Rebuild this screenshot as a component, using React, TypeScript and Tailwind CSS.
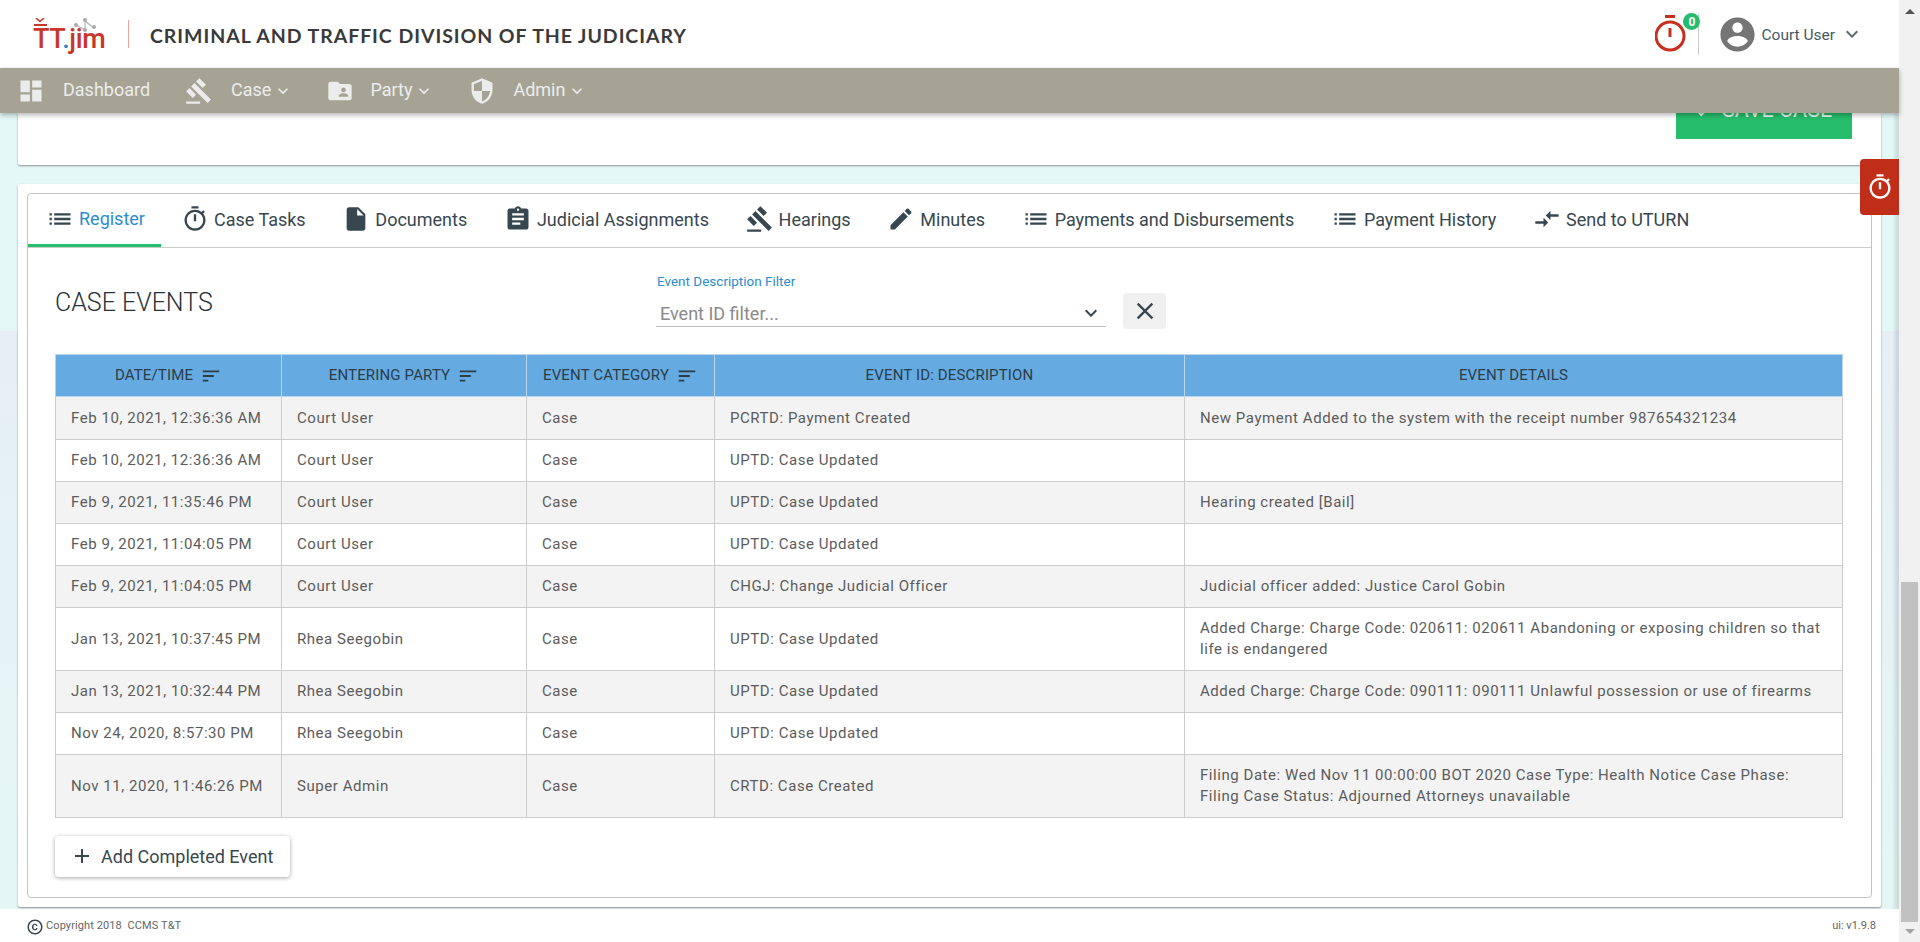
import React from 'react';

const ICONS = {
  dashboard: 'M3 13h8V3H3v10zm0 8h8v-6H3v6zm10 0h8V11h-8v10zm0-18v6h8V3h-8z',
  gavel: 'M1 21h12v2H1zM5.245 8.07l2.83-2.827 14.14 14.142-2.828 2.828zM12.317 1l5.657 5.656-2.83 2.83-5.654-5.66zM3.825 9.485l5.657 5.657-2.828 2.828-5.657-5.657z',
  folderShared: 'M20 6h-8l-2-2H4c-1.1 0-1.99.9-1.99 2L2 18c0 1.1.9 2 2 2h16c1.1 0 2-.9 2-2V8c0-1.1-.9-2-2-2zm-5 3c1.1 0 2 .9 2 2s-.9 2-2 2-2-.9-2-2 .9-2 2-2zm4 8h-8v-1c0-1.33 2.67-2 4-2s4 .67 4 2v1z',
  security: 'M12 1L3 5v6c0 5.55 3.84 10.74 9 12 5.16-1.26 9-6.45 9-12V5l-9-4zm0 10.99h7c-.53 4.12-3.28 7.79-7 8.94V12H5V6.3l7-3.11v8.8z',
  list: 'M3 13h2v-2H3v2zm0 4h2v-2H3v2zm0-8h2V7H3v2zm4 4h14v-2H7v2zm0 4h14v-2H7v2zM7 7v2h14V7H7z',
  timer: 'M15 1H9v2h6V1zm-4 13h2V8h-2v6zm8.03-6.61l1.42-1.42c-.43-.51-.9-.99-1.41-1.41l-1.42 1.42C16.07 4.74 14.12 4 12 4c-4.97 0-9 4.03-9 9s4.02 9 9 9 9-4.03 9-9c0-2.12-.74-4.07-1.97-5.61zM12 20c-3.87 0-7-3.13-7-7s3.13-7 7-7 7 3.13 7 7-3.13 7-7 7z',
  file: 'M6 2c-1.1 0-1.99.9-1.99 2L4 20c0 1.1.89 2 1.99 2H18c1.1 0 2-.9 2-2V8l-6-6H6zm7 7V3.5L18.5 9H13z',
  assignment: 'M19 3h-4.18C14.4 1.84 13.3 1 12 1c-1.3 0-2.4.84-2.82 2H5c-1.1 0-2 .9-2 2v14c0 1.1.9 2 2 2h14c1.1 0 2-.9 2-2V5c0-1.1-.9-2-2-2zm-7 0c.55 0 1 .45 1 1s-.45 1-1 1-1-.45-1-1 .45-1 1-1zm2 14H7v-2h7v2zm3-4H7v-2h10v2zm0-4H7V7h10v2z',
  edit: 'M3 17.25V21h3.75L17.81 9.94l-3.75-3.75L3 17.25zM20.71 7.04c.39-.39.39-1.02 0-1.41l-2.34-2.34c-.39-.39-1.02-.39-1.41 0l-1.83 1.83 3.75 3.75 1.83-1.83z',
  compare: 'M9.01 14H2v2h7.01v3L13 15l-3.99-4v3zm5.98-1v-3H22V8h-7.01V5L11 9l3.99 4z',
  sort: 'M3 18h6v-2H3v2zM3 6v2h18V6H3zm0 7h12v-2H3v2z',
  account: 'M12 2C6.48 2 2 6.48 2 12s4.48 10 10 10 10-4.48 10-10S17.52 2 12 2zm0 3c1.66 0 3 1.34 3 3s-1.34 3-3 3-3-1.34-3-3 1.34-3 3-3zm0 14.2c-2.5 0-4.71-1.28-6-3.22.03-1.99 4-3.08 6-3.08 1.99 0 5.97 1.09 6 3.08-1.29 1.94-3.5 3.22-6 3.22z',
  copyright: 'M10.08 10.86c.05-.33.16-.62.3-.87s.34-.46.59-.62c.24-.15.54-.22.91-.23.23.01.44.05.63.13.2.09.38.21.52.36s.25.33.34.53.13.42.14.64h1.79c-.02-.47-.11-.9-.28-1.29s-.4-.73-.7-1.01-.66-.5-1.08-.66-.88-.23-1.39-.23c-.65 0-1.22.11-1.7.34s-.88.53-1.2.92-.56.84-.71 1.36S8 11.29 8 11.87v.27c0 .58.08 1.12.23 1.64s.39.97.71 1.35.72.69 1.2.91 1.05.34 1.7.34c.47 0 .91-.08 1.32-.23s.77-.36 1.08-.63.56-.58.74-.94.29-.74.3-1.15h-1.79c-.01.21-.06.4-.15.58s-.21.33-.36.46-.32.23-.52.3c-.19.07-.39.09-.6.1-.36-.01-.66-.08-.89-.23-.25-.16-.45-.37-.59-.62s-.25-.55-.3-.88-.08-.67-.08-1v-.27c0-.35.03-.68.08-1.01zM12 2C6.48 2 2 6.48 2 12s4.48 10 10 10 10-4.48 10-10S17.52 2 12 2zm0 18c-4.41 0-8-3.59-8-8s3.59-8 8-8 8 3.59 8 8-3.59 8-8 8z',
  check: 'M9 16.17L4.83 12l-1.42 1.41L9 19 21 7l-1.41-1.41z',
  plus: 'M19 13h-6v6h-2v-6H5v-2h6V5h2v6h6v2z',
  close: 'M19 6.41L17.59 5 12 10.59 6.41 5 5 6.41 10.59 12 5 17.59 6.41 19 12 13.41 17.59 19 19 17.59 13.41 12z',
  chevron: 'M7.41 8.59L12 13.17l4.59-4.58L18 10l-6 6-6-6z',
};

type IconName = keyof typeof ICONS;

const Icon: React.FC<{ name: IconName; className?: string }> = ({ name, className }) => (
  <svg viewBox="0 0 24 24" fill="currentColor" className={`shrink-0 ${className ?? ''}`}>
    <path d={ICONS[name]} />
  </svg>
);

const NAV_ITEMS: { label: string; icon: IconName; menu: boolean; className: string; textClass: string }[] = [
  { label: 'Dashboard', icon: 'dashboard', menu: false, className: 'ml-[17px]', textClass: 'ml-[18px]' },
  { label: 'Case', icon: 'gavel', menu: true, className: 'ml-[35px]', textClass: 'ml-[18px]' },
  { label: 'Party', icon: 'folderShared', menu: true, className: 'ml-[33px]', textClass: 'ml-[16px]' },
  { label: 'Admin', icon: 'security', menu: true, className: 'ml-[34px]', textClass: 'ml-[17px]' },
];

const TABS: { label: string; icon: IconName; className: string; active?: boolean }[] = [
  { label: 'Register', icon: 'list', active: true, className: 'pl-[18px] pr-[16px]' },
  { label: 'Case Tasks', icon: 'timer', className: 'ml-[2px] pl-[18px] pr-[18.7px]' },
  { label: 'Documents', icon: 'file', className: 'pl-[18px] pr-[18.7px]' },
  { label: 'Judicial Assignments', icon: 'assignment', className: 'pl-[18px] pr-[18.7px]' },
  { label: 'Hearings', icon: 'gavel', className: 'pl-[18px] pr-[18.7px]' },
  { label: 'Minutes', icon: 'edit', className: 'pl-[18px] pr-[18.7px]' },
  { label: 'Payments and Disbursements', icon: 'list', className: 'pl-[18px] pr-[18.7px]' },
  { label: 'Payment History', icon: 'list', className: 'pl-[18px] pr-[18.7px]' },
  { label: 'Send to UTURN', icon: 'compare', className: 'pl-[18px] pr-[18.7px]' },
];

const EVENTS = [
  ['Feb 10, 2021, 12:36:36 AM', 'Court User', 'Case', 'PCRTD: Payment Created', 'New Payment Added to the system with the receipt number 987654321234'],
  ['Feb 10, 2021, 12:36:36 AM', 'Court User', 'Case', 'UPTD: Case Updated', ''],
  ['Feb 9, 2021, 11:35:46 PM', 'Court User', 'Case', 'UPTD: Case Updated', 'Hearing created [Bail]'],
  ['Feb 9, 2021, 11:04:05 PM', 'Court User', 'Case', 'UPTD: Case Updated', ''],
  ['Feb 9, 2021, 11:04:05 PM', 'Court User', 'Case', 'CHGJ: Change Judicial Officer', 'Judicial officer added: Justice Carol Gobin'],
  ['Jan 13, 2021, 10:37:45 PM', 'Rhea Seegobin', 'Case', 'UPTD: Case Updated', 'Added Charge: Charge Code: 020611: 020611 Abandoning or exposing children so that life is endangered'],
  ['Jan 13, 2021, 10:32:44 PM', 'Rhea Seegobin', 'Case', 'UPTD: Case Updated', 'Added Charge: Charge Code: 090111: 090111 Unlawful possession or use of firearms'],
  ['Nov 24, 2020, 8:57:30 PM', 'Rhea Seegobin', 'Case', 'UPTD: Case Updated', ''],
  ['Nov 11, 2020, 11:46:26 PM', 'Super Admin', 'Case', 'CRTD: Case Created', 'Filing Date: Wed Nov 11 00:00:00 BOT 2020 Case Type: Health Notice Case Phase: Filing Case Status: Adjourned Attorneys unavailable'],
];

const COLUMNS = [
  { label: 'DATE/TIME', sort: true, width: 'w-[226px]' },
  { label: 'ENTERING PARTY', sort: true, width: 'w-[245px]' },
  { label: 'EVENT CATEGORY', sort: true, width: 'w-[188px]' },
  { label: 'EVENT ID: DESCRIPTION', sort: false, width: 'w-[470px]' },
  { label: 'EVENT DETAILS', sort: false, width: '' },
];

const Logo = () => (
  <div className="relative ml-[33px] mt-[1px] h-[34px] w-[74px]">
    <span className="absolute left-0 top-[7px] font-['Roboto',sans-serif] text-[27px] leading-[28px] font-medium tracking-[-0.4px] text-[#c8372b]">
      TT<span className="text-[#2f86c5]">.</span>jim
    </span>
    <svg viewBox="0 0 74 34" className="absolute left-0 top-0 h-[34px] w-[74px]">
      <path d="M3 0l4 3.5L11 0" fill="none" stroke="#c8372b" strokeWidth="1.6" />
      <rect x="1" y="6" width="13" height="2" fill="#c8372b" />
      <path d="M43 7l9 5V3l9 7" fill="none" stroke="#b5b5b5" strokeWidth="1.2" />
      <circle cx="43" cy="7" r="2" fill="#a9a9a9" />
      <circle cx="52" cy="12" r="2" fill="#a9a9a9" />
      <circle cx="52" cy="2" r="2" fill="#a9a9a9" />
      <circle cx="61" cy="9" r="2" fill="#a9a9a9" />
    </svg>
  </div>
);

const Header = () => (
  <header className="flex h-[68px] shrink-0 items-center bg-white">
    <Logo />
    <div className="ml-[21px] h-[28px] w-px bg-[#e9a99f]" />
    <h1 className="ml-[21px] mt-[3px] font-['Lato',sans-serif] text-[19.5px] font-bold tracking-[0.95px] text-[#3a3a3a]">
      CRIMINAL AND TRAFFIC DIVISION OF THE JUDICIARY
    </h1>
    <div className="ml-auto flex items-center">
      <div className="relative h-[40px] w-[36px]">
        <svg viewBox="0 0 36 40" className="h-[40px] w-[36px] text-[#c62f1e]" fill="none" stroke="currentColor">
          <circle cx="15" cy="22" r="14" strokeWidth="3" />
          <path d="M10 2.500h10" strokeWidth="3" />
          <path d="M15 14v9" strokeWidth="3" />
        </svg>
        <span className="absolute right-[-9px] top-[-1px] flex h-[17px] w-[17px] items-center justify-center rounded-full bg-[#26bd6c] font-['Roboto',sans-serif] text-[12px] font-bold text-white">
          0
        </span>
      </div>
      <div className="ml-[7px] h-[41px] w-px bg-[#cccccc]" />
      <Icon name="account" className="ml-[18px] h-[41px] w-[41px] text-[#757575]" />
      <span className="ml-[3px] mt-[3px] font-['Roboto',sans-serif] text-[15.5px] text-[#455a64]">Court User</span>
      <Icon name="chevron" className="ml-[5px] mr-[35px] h-[24px] w-[24px] text-[#5f6b73]" />
    </div>
  </header>
);

const NavBar = () => (
  <nav className="relative z-20 flex h-[45px] shrink-0 items-center bg-[#a6a394] font-['Roboto',sans-serif] text-[18px] text-[#ececec] shadow-[0_2px_5px_rgba(0,0,0,0.3)]">
    {NAV_ITEMS.map((item) => (
      <div key={item.label} className={`flex items-center ${item.className}`}>
        <Icon name={item.icon} className="h-[28px] w-[28px]" />
        <span className={`${item.textClass} mb-[2px]`}>{item.label}</span>
        {item.menu && <Icon name="chevron" className="ml-[2px] h-[20px] w-[20px]" />}
      </div>
    ))}
  </nav>
);

const TabBar = () => (
  <div className="flex h-[54px] border-b border-[#cccccc] font-['Roboto',sans-serif] text-[18px] text-[#37474f]">
    {TABS.map((tab) => (
      <div
        key={tab.label}
        className={`flex items-center gap-[5px] ${tab.className} ${
          tab.active ? 'border-b-[3px] border-[#26bd6c] pb-[1px] text-[#2d8ccf]' : 'pb-[3px]'
        }`}
      >
        <Icon name={tab.icon} className={`h-[28px] w-[28px] ${tab.active ? 'text-[#37474f]' : ''}`} />
        <span>{tab.label}</span>
      </div>
    ))}
  </div>
);

const EventFilter = () => (
  <div className="ml-[445px] flex items-start gap-[17px]">
    <div className="w-[450px]">
      <div className="mt-[-4px] ml-[1px] text-[13.5px] leading-[16px] text-[#2d8ccf]">Event Description Filter</div>
      <div className="mt-[7px] flex h-[31px] items-center justify-between border-b border-[#bdbdbd] pl-[4px] pr-[3px] pt-[4px] text-[18px] text-[#8a8a8a]">
        <span>Event ID filter...</span>
        <Icon name="chevron" className="h-[24px] w-[24px] text-[#37474f]" />
      </div>
    </div>
    <button className="mt-[16px] flex h-[36px] w-[43px] items-center justify-center rounded bg-[#f0f0f0] text-[#37474f]">
      <Icon name="close" className="h-[28px] w-[28px]" />
    </button>
  </div>
);

const EventsTable = () => (
  <table className="w-[1788px] table-fixed border-collapse text-[15px] leading-[21px] tracking-[0.55px] text-[#5c5c5c]">
    <thead>
      <tr className="h-[42px] bg-[#66aae2] text-[#2b3d49]">
        {COLUMNS.map((col) => (
          <th key={col.label} className={`border border-[#b9d6ee] font-normal tracking-[0.15px] ${col.width}`}>
            <div className="flex items-center justify-center gap-[7px]">
              {col.label}
              {col.sort && <Icon name="sort" className="h-[22px] w-[22px]" />}
            </div>
          </th>
        ))}
      </tr>
    </thead>
    <tbody>
      {EVENTS.map((row, i) => (
        <tr key={i} className={`${i % 2 === 0 ? 'bg-[#f3f3f3]' : 'bg-white'} ${i === 0 ? 'h-[43px]' : ''}`}>
          {row.map((cell, j) => (
            <td key={j} className="border border-[#cccccc] px-[15px] py-[10px] align-middle">
              {cell}
            </td>
          ))}
        </tr>
      ))}
    </tbody>
  </table>
);

const App: React.FC = () => {
  return (
    <div className="flex h-screen overflow-hidden font-['Roboto',sans-serif]">
      <div className="relative flex min-w-0 flex-1 flex-col bg-[linear-gradient(#e4f9f7_0,#e4f9f7_331px,#e6eff6_331px,#e4f7f5_909px)] shadow-[inset_-4px_0_4px_rgba(0,0,0,0.12)]">
        <Header />
        <NavBar />

        {/* top card, scrolled mostly under the nav */}
        <div className="mx-[18px] flex h-[52px] shrink-0 items-end justify-end overflow-hidden rounded-b-[2px] bg-white pr-[29px] shadow-[0_1px_2px_rgba(0,0,0,0.4)]">
          <button className="mb-[26px] flex h-[57px] w-[176px] shrink-0 items-center gap-[7px] whitespace-nowrap bg-[#26bd6c] pb-[1px] pl-[17px] text-[21.5px] text-[#e9f8ef]">
            <Icon name="check" className="h-[22px] w-[22px]" />
            SAVE CASE
          </button>
        </div>

        {/* register card */}
        <div className="mx-[18px] mt-[19px] h-[723px] shrink-0 rounded-[2px] bg-white px-[9px] pt-[9px] shadow-[0_1px_2px_rgba(0,0,0,0.4)]">
          <div className="h-[705px] rounded-[4px] border border-[#c4c4c4]">
            <TabBar />
            <div className="px-[27px]">
              <div className="flex h-[106px] items-start pt-[29px]">
                <h2 className="mt-[11px] w-[156px] whitespace-nowrap text-[25px] leading-[30px] font-light text-[#263238]">CASE EVENTS</h2>
                <EventFilter />
              </div>
              <EventsTable />
              <button className="mt-[18px] flex h-[41px] w-[235px] items-center gap-[7px] rounded bg-white pb-[1px] pl-[15px] text-[18px] text-[#37474f] shadow-[0_1px_4px_rgba(0,0,0,0.35)]">
                <Icon name="plus" className="h-[24px] w-[24px]" />
                Add Completed Event
              </button>
            </div>
          </div>
        </div>

        <footer className="mt-[2px] flex flex-1 items-center bg-white pl-[26px] pr-[23px] pt-[2px] text-[#666666]">
          <Icon name="copyright" className="h-[18px] w-[18px] text-[#37474f]" />
          <span className="ml-[2px] text-[11px] tracking-[0.1px] whitespace-pre">Copyright 2018  CCMS T&amp;T</span>
          <span className="ml-auto text-[11px]">ui: v1.9.8</span>
        </footer>

        {/* floating timer tab */}
        <button className="absolute right-0 top-[159px] z-10 flex h-[56px] w-[39px] items-center justify-center rounded-l bg-[#c02e1a] text-white">
          <Icon name="timer" className="h-[28px] w-[28px]" />
        </button>
      </div>

      {/* browser scrollbar */}
      <div className="flex w-[21px] shrink-0 flex-col items-center bg-[#f1f1f1]">
        <div className="mt-[9px] h-0 w-0 border-x-[5px] border-b-[5px] border-x-transparent border-b-[#555555]" />
        <div className="mt-[568px] h-[340px] w-[17px] bg-[#c1c1c1]" />
        <div className="mt-[7px] h-0 w-0 border-x-[5px] border-t-[5px] border-x-transparent border-t-[#a3a3a3]" />
      </div>
    </div>
  );
};

export default App;
